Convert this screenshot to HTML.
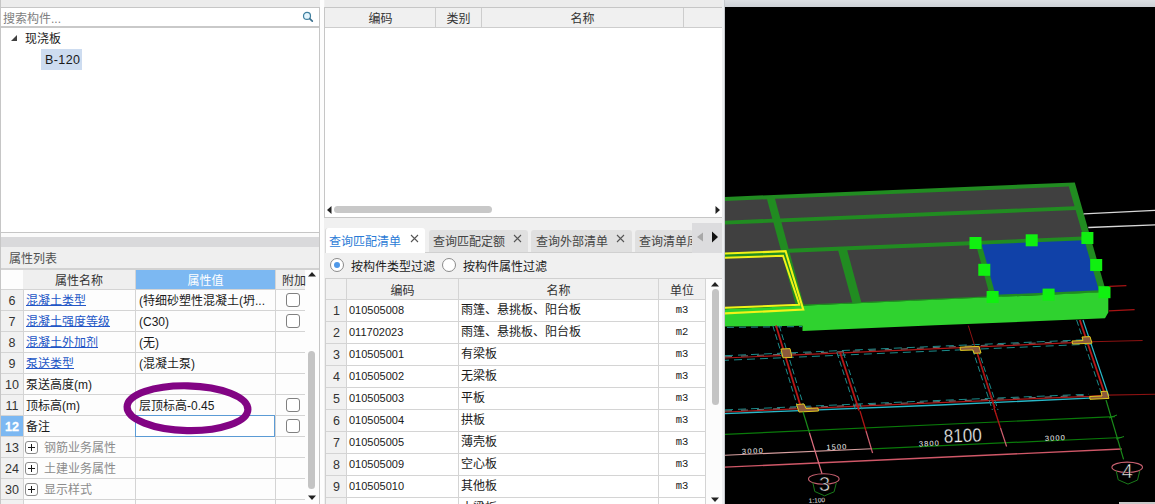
<!DOCTYPE html>
<html lang="zh-CN">
<head>
<meta charset="utf-8">
<title>属性列表</title>
<style>
*{box-sizing:border-box;margin:0;padding:0}
html,body{width:1155px;height:504px;overflow:hidden;background:#f0f0f0}
body{position:relative;font-family:"Liberation Sans","Noto Sans CJK SC",sans-serif;font-size:12px;color:#1a1a1a;line-height:1}
.a{position:absolute}
.t{position:absolute;white-space:nowrap;line-height:14px;height:14px}
.hl{position:absolute;height:1px;background:#d4d4d4}
.vl{position:absolute;width:1px;background:#d4d4d4}
.cb{position:absolute;width:14px;height:14px;border:1px solid #808080;border-radius:3px;background:#fff}
.pm{position:absolute;width:13px;height:13px;border:1px solid #8c8c8c;border-radius:3px;background:#fff}
.pm:before{content:"";position:absolute;left:2px;top:5px;width:7px;height:1px;background:#1a1a1a}
.pm:after{content:"";position:absolute;left:5px;top:2px;width:1px;height:7px;background:#1a1a1a}
.bl{color:#2356c6;text-decoration:underline;text-underline-offset:0px;text-decoration-thickness:1px}
.gy{color:#8c8c8c}
.c{text-align:center}
.tab{position:absolute;top:230px;height:22px;background:#e0e0e0;border-radius:3px 3px 0 0}
.x{position:absolute}
</style>
</head>
<body>

<!-- LEFT PANEL -->
<div class="a" style="left:0;top:0;width:325px;height:504px;background:#f0f0f0"></div>
<div class="a" style="left:0;top:0;width:320px;height:7px;background:#ececec"></div>
<div class="a" style="left:0;top:7px;width:320px;height:226px;background:#fff;border:1px solid #c6c6c6"></div>
<div class="t" style="left:3px;top:12px;color:#808080">搜索构件...</div>
<svg class="a" style="left:301px;top:10px" width="14" height="14" viewBox="0 0 14 14"><circle cx="6" cy="5.9" r="3.5" fill="#e4f5fd" stroke="#3f7f9f" stroke-width="1.2"/><path d="M8.7 8.6 L11.3 11.1" stroke="#3f7290" stroke-width="1.7" stroke-linecap="round"/></svg>
<div class="a" style="left:1px;top:26px;width:318px;height:2px;background:#c9c9c9"></div>
<svg class="a" style="left:10px;top:34px" width="8" height="8" viewBox="0 0 8 8"><path d="M7 1 L7 7 L1 7 Z" fill="#404040"/></svg>
<div class="t" style="left:25px;top:32px">现浇板</div>
<div class="a" style="left:41px;top:49px;width:41px;height:21px;background:#cddcf0"></div>
<div class="t" style="left:45px;top:53px;font-size:12.5px;letter-spacing:.4px">B-120</div>
<div class="a" style="left:0;top:233px;width:320px;height:4px;background:#fbfbfb"></div>
<div class="a" style="left:0;top:237px;width:320px;height:10px;background:#d9d9db"></div>
<div class="a" style="left:0;top:247px;width:320px;height:23px;background:#efefef"></div>
<div class="t" style="left:9px;top:252px;color:#505050;font-size:12px">属性列表</div>
<div class="a" style="left:0;top:268px;width:320px;height:2px;background:#d2d2d2"></div>
<div class="a" style="left:1px;top:270px;width:318px;height:234px;background:#fdfdfd"></div>
<div class="a" style="left:1px;top:290px;width:22px;height:214px;background:#f1f1f1"></div>
<div class="a" style="left:23px;top:270px;width:282px;height:19px;background:#efefef"></div>
<div class="a" style="left:136px;top:270px;width:139px;height:19px;background:#7cb8f2"></div>
<div class="t c" style="left:22px;top:274px;width:114px;color:#333">属性名称</div>
<div class="t c" style="left:136px;top:274px;width:139px;color:#fff">属性值</div>
<div class="t" style="left:282px;top:274px;color:#333">附加</div>

<div class="hl" style="left:1px;top:310px;width:304px"></div>
<div class="t c" style="left:1px;top:294px;width:22px;color:#333;font-size:12.5px">6</div>
<div class="t bl" style="left:26px;top:294px">混凝土类型</div>
<div class="t" style="left:139px;top:294px">(特细砂塑性混凝土(坍...</div>
<div class="cb" style="left:286px;top:293px"></div>
<div class="hl" style="left:1px;top:331px;width:304px"></div>
<div class="t c" style="left:1px;top:315px;width:22px;color:#333;font-size:12.5px">7</div>
<div class="t bl" style="left:26px;top:315px">混凝土强度等级</div>
<div class="t" style="left:139px;top:315px">(C30)</div>
<div class="cb" style="left:286px;top:314px"></div>
<div class="hl" style="left:1px;top:352px;width:304px"></div>
<div class="t c" style="left:1px;top:336px;width:22px;color:#333;font-size:12.5px">8</div>
<div class="t bl" style="left:26px;top:336px">混凝土外加剂</div>
<div class="t" style="left:139px;top:336px">(无)</div>
<div class="hl" style="left:1px;top:373px;width:304px"></div>
<div class="t c" style="left:1px;top:357px;width:22px;color:#333;font-size:12.5px">9</div>
<div class="t bl" style="left:26px;top:357px">泵送类型</div>
<div class="t" style="left:139px;top:357px">(混凝土泵)</div>
<div class="hl" style="left:1px;top:394px;width:304px"></div>
<div class="t c" style="left:1px;top:378px;width:22px;color:#333;font-size:12.5px">10</div>
<div class="t " style="left:26px;top:378px">泵送高度(m)</div>
<div class="hl" style="left:1px;top:415px;width:304px"></div>
<div class="t c" style="left:1px;top:399px;width:22px;color:#333;font-size:12.5px">11</div>
<div class="t " style="left:26px;top:399px">顶标高(m)</div>
<div class="t" style="left:139px;top:399px">层顶标高-0.45</div>
<div class="cb" style="left:286px;top:398px"></div>
<div class="hl" style="left:1px;top:436px;width:304px"></div>
<div class="a" style="left:1px;top:416px;width:22px;height:20px;background:#7cb8f2"></div>
<div class="t c" style="left:1px;top:420px;width:22px;color:#fff;font-weight:bold;font-size:12.5px;-webkit-text-stroke:.3px #fff">12</div>
<div class="t " style="left:26px;top:420px">备注</div>
<div class="cb" style="left:286px;top:419px"></div>
<div class="hl" style="left:1px;top:457px;width:304px"></div>
<div class="t c" style="left:1px;top:441px;width:22px;color:#333;font-size:12.5px">13</div>
<div class="pm" style="left:25px;top:441px"></div>
<div class="t gy" style="left:44px;top:441px">钢筋业务属性</div>
<div class="hl" style="left:1px;top:478px;width:304px"></div>
<div class="t c" style="left:1px;top:462px;width:22px;color:#333;font-size:12.5px">24</div>
<div class="pm" style="left:25px;top:462px"></div>
<div class="t gy" style="left:44px;top:462px">土建业务属性</div>
<div class="hl" style="left:1px;top:499px;width:304px"></div>
<div class="t c" style="left:1px;top:483px;width:22px;color:#333;font-size:12.5px">30</div>
<div class="pm" style="left:25px;top:483px"></div>
<div class="t gy" style="left:44px;top:483px">显示样式</div>
<div class="vl" style="left:23px;top:290px;height:214px"></div>
<div class="vl" style="left:135px;top:270px;height:234px"></div>
<div class="vl" style="left:275px;top:270px;height:234px"></div>
<div class="hl" style="left:1px;top:289px;width:304px"></div>
<div class="a" style="left:135px;top:415px;width:140px;height:22px;border:1px solid #5b9bd5;background:#fff"></div>
<svg class="a" style="left:115px;top:375px" width="150" height="70" viewBox="115 375 150 70"><ellipse cx="187.5" cy="408.2" rx="60.4" ry="22.4" fill="none" stroke="#820484" stroke-width="7.2" transform="rotate(1.2 187.5 408.2)"/></svg>
<svg class="a" style="left:307px;top:271px" width="10" height="6" viewBox="0 0 10 6"><path d="M1 5.5 L5 1 L9 5.5 Z" fill="#222"/></svg>
<svg class="a" style="left:307px;top:495px" width="10" height="6" viewBox="0 0 10 6"><path d="M1 .5 L5 5 L9 .5 Z" fill="#222"/></svg>
<div class="a" style="left:308px;top:351px;width:7px;height:138px;background:#c4c4c4;border-radius:3.5px"></div>
<div class="a" style="left:319px;top:7px;width:1px;height:497px;background:#c6c6c6"></div>
<div class="a" style="left:0;top:0;width:1px;height:504px;background:#c6c6c6"></div>
<div class="a" style="left:320px;top:0;width:4px;height:504px;background:#fdfdfd"></div>

<!-- MIDDLE PANEL -->
<div class="a" style="left:325px;top:0;width:398px;height:7px;background:#ececec"></div>
<div class="a" style="left:324px;top:7px;width:399px;height:211px;background:#fff;border:1px solid #c6c6c6"></div>
<div class="a" style="left:325px;top:8px;width:397px;height:19px;background:#f0f0f0"></div>
<div class="hl" style="left:325px;top:27px;width:397px;background:#cdcdcd"></div>
<div class="vl" style="left:435px;top:8px;height:19px;background:#cdcdcd"></div>
<div class="vl" style="left:481px;top:8px;height:19px;background:#cdcdcd"></div>
<div class="vl" style="left:683px;top:8px;height:19px;background:#cdcdcd"></div>
<div class="t c" style="left:326px;top:12px;width:109px;color:#333">编码</div>
<div class="t c" style="left:436px;top:12px;width:45px;color:#333">类别</div>
<div class="t c" style="left:482px;top:12px;width:201px;color:#333">名称</div>
<svg class="a" style="left:326px;top:205px" width="6" height="10" viewBox="0 0 6 10"><path d="M5.5 1 L1 5 L5.5 9 Z" fill="#222"/></svg>
<svg class="a" style="left:715px;top:205px" width="6" height="10" viewBox="0 0 6 10"><path d="M.5 1 L5 5 L.5 9 Z" fill="#222"/></svg>
<div class="a" style="left:334px;top:206px;width:158px;height:7px;background:#c8c8c8;border-radius:4px"></div>

<div class="a" style="left:325px;top:218px;width:398px;height:35px;background:#f0f0f0"></div>
<div class="a" style="left:325px;top:252px;width:398px;height:1px;background:#d0d0d0"></div>
<div class="tab" style="left:325px;width:100px;background:#fff;top:228px;height:25px;border-left:1px solid #d8d8d8"></div>
<div class="t" style="left:329px;top:235px;color:#2b7bd6">查询匹配清单</div>
<div class="tab" style="left:429px;width:99px"></div>
<div class="t" style="left:433px;top:235px;color:#444">查询匹配定额</div>
<div class="tab" style="left:531px;width:101px"></div>
<div class="t" style="left:536px;top:235px;color:#444">查询外部清单</div>
<div class="tab" style="left:635px;width:58px"></div>
<div class="a" style="left:639px;top:235px;width:53px;height:14px;overflow:hidden"><div class="t" style="left:0;top:0;color:#444">查询清单库</div></div>
<div class="a" style="left:692px;top:223px;width:31px;height:30px;background:#dcdcde"></div>
<svg class="a" style="left:696px;top:232px" width="8" height="10" viewBox="0 0 8 10"><path d="M7 .5 L1 5 L7 9.5 Z" fill="#a8a8a8"/></svg>
<svg class="a" style="left:711px;top:231px" width="8" height="12" viewBox="0 0 8 12"><path d="M1 .5 L7 6 L1 11.5 Z" fill="#111"/></svg>

<svg class="a" style="left:410px;top:234px" width="9" height="9" viewBox="0 0 9 9"><path d="M1 1 L8 8 M8 1 L1 8" stroke="#555" stroke-width="1.1" fill="none"/></svg>
<svg class="a" style="left:513px;top:234px" width="9" height="9" viewBox="0 0 9 9"><path d="M1 1 L8 8 M8 1 L1 8" stroke="#555" stroke-width="1.1" fill="none"/></svg>
<svg class="a" style="left:616px;top:234px" width="9" height="9" viewBox="0 0 9 9"><path d="M1 1 L8 8 M8 1 L1 8" stroke="#555" stroke-width="1.1" fill="none"/></svg>
<div class="a" style="left:325px;top:253px;width:398px;height:25px;background:#f0f0f0"></div>
<div class="a" style="left:330px;top:258px;width:14px;height:14px;border:1px solid #8a8a8a;border-radius:50%;background:#fff"></div>
<div class="a" style="left:334px;top:262px;width:6px;height:6px;border-radius:50%;background:#4f98e8"></div>
<div class="t" style="left:351px;top:260px">按构件类型过滤</div>
<div class="a" style="left:442px;top:258px;width:14px;height:14px;border:1px solid #8a8a8a;border-radius:50%;background:#fff"></div>
<div class="t" style="left:463px;top:260px">按构件属性过滤</div>

<div class="a" style="left:325px;top:278px;width:398px;height:226px;background:#fff;border-top:1px solid #d0d0d0;border-left:1px solid #d0d0d0"></div>
<div class="a" style="left:326px;top:279px;width:379px;height:20px;background:#f0f0f0"></div>
<div class="a" style="left:326px;top:279px;width:20px;height:225px;background:#f1f1f1"></div>
<div class="t c" style="left:347px;top:284px;width:111px;color:#333">编码</div>
<div class="t c" style="left:459px;top:284px;width:199px;color:#333">名称</div>
<div class="t c" style="left:659px;top:284px;width:46px;color:#333">单位</div>

<div class="hl" style="left:326px;top:321px;width:379px"></div>
<div class="t c" style="left:326px;top:304px;width:21px;color:#333;font-size:12.5px">1</div>
<div class="t" style="left:349px;top:303px;font-size:11px">010505008</div>
<div class="t" style="left:461px;top:303px">雨篷、悬挑板、阳台板</div>
<div class="t c" style="left:659px;top:303px;width:46px;font-family:'Liberation Mono',monospace;font-size:10.5px">m3</div>
<div class="hl" style="left:326px;top:343px;width:379px"></div>
<div class="t c" style="left:326px;top:326px;width:21px;color:#333;font-size:12.5px">2</div>
<div class="t" style="left:349px;top:325px;font-size:11px">011702023</div>
<div class="t" style="left:461px;top:325px">雨篷、悬挑板、阳台板</div>
<div class="t c" style="left:659px;top:325px;width:46px;font-family:'Liberation Mono',monospace;font-size:10.5px">m2</div>
<div class="hl" style="left:326px;top:365px;width:379px"></div>
<div class="t c" style="left:326px;top:348px;width:21px;color:#333;font-size:12.5px">3</div>
<div class="t" style="left:349px;top:347px;font-size:11px">010505001</div>
<div class="t" style="left:461px;top:347px">有梁板</div>
<div class="t c" style="left:659px;top:347px;width:46px;font-family:'Liberation Mono',monospace;font-size:10.5px">m3</div>
<div class="hl" style="left:326px;top:387px;width:379px"></div>
<div class="t c" style="left:326px;top:370px;width:21px;color:#333;font-size:12.5px">4</div>
<div class="t" style="left:349px;top:369px;font-size:11px">010505002</div>
<div class="t" style="left:461px;top:369px">无梁板</div>
<div class="t c" style="left:659px;top:369px;width:46px;font-family:'Liberation Mono',monospace;font-size:10.5px">m3</div>
<div class="hl" style="left:326px;top:409px;width:379px"></div>
<div class="t c" style="left:326px;top:392px;width:21px;color:#333;font-size:12.5px">5</div>
<div class="t" style="left:349px;top:391px;font-size:11px">010505003</div>
<div class="t" style="left:461px;top:391px">平板</div>
<div class="t c" style="left:659px;top:391px;width:46px;font-family:'Liberation Mono',monospace;font-size:10.5px">m3</div>
<div class="hl" style="left:326px;top:431px;width:379px"></div>
<div class="t c" style="left:326px;top:414px;width:21px;color:#333;font-size:12.5px">6</div>
<div class="t" style="left:349px;top:413px;font-size:11px">010505004</div>
<div class="t" style="left:461px;top:413px">拱板</div>
<div class="t c" style="left:659px;top:413px;width:46px;font-family:'Liberation Mono',monospace;font-size:10.5px">m3</div>
<div class="hl" style="left:326px;top:453px;width:379px"></div>
<div class="t c" style="left:326px;top:436px;width:21px;color:#333;font-size:12.5px">7</div>
<div class="t" style="left:349px;top:435px;font-size:11px">010505005</div>
<div class="t" style="left:461px;top:435px">薄壳板</div>
<div class="t c" style="left:659px;top:435px;width:46px;font-family:'Liberation Mono',monospace;font-size:10.5px">m3</div>
<div class="hl" style="left:326px;top:475px;width:379px"></div>
<div class="t c" style="left:326px;top:458px;width:21px;color:#333;font-size:12.5px">8</div>
<div class="t" style="left:349px;top:457px;font-size:11px">010505009</div>
<div class="t" style="left:461px;top:457px">空心板</div>
<div class="t c" style="left:659px;top:457px;width:46px;font-family:'Liberation Mono',monospace;font-size:10.5px">m3</div>
<div class="hl" style="left:326px;top:497px;width:379px"></div>
<div class="t c" style="left:326px;top:480px;width:21px;color:#333;font-size:12.5px">9</div>
<div class="t" style="left:349px;top:479px;font-size:11px">010505010</div>
<div class="t" style="left:461px;top:479px">其他板</div>
<div class="t c" style="left:659px;top:479px;width:46px;font-family:'Liberation Mono',monospace;font-size:10.5px">m3</div>
<div class="hl" style="left:326px;top:519px;width:379px"></div>
<div class="t c" style="left:326px;top:502px;width:21px;color:#333;font-size:12.5px"></div>
<div class="t" style="left:349px;top:501px;font-size:11px"></div>
<div class="t" style="left:461px;top:501px">十梁板</div>
<div class="t c" style="left:659px;top:501px;width:46px;font-family:'Liberation Mono',monospace;font-size:10.5px"></div>
<div class="hl" style="left:326px;top:299px;width:379px"></div>
<div class="vl" style="left:346px;top:279px;height:225px"></div>
<div class="vl" style="left:458px;top:279px;height:225px"></div>
<div class="vl" style="left:658px;top:279px;height:225px"></div>
<div class="vl" style="left:705px;top:279px;height:225px"></div>
<div class="a" style="left:706px;top:279px;width:17px;height:225px;background:#fcfcfc"></div>
<svg class="a" style="left:710px;top:281px" width="10" height="6" viewBox="0 0 10 6"><path d="M1 5.5 L5 1 L9 5.5 Z" fill="#222"/></svg>
<svg class="a" style="left:710px;top:497px" width="10" height="6" viewBox="0 0 10 6"><path d="M1 .5 L5 5 L9 .5 Z" fill="#222"/></svg>
<div class="a" style="left:711.5px;top:289px;width:7px;height:116px;background:#c4c4c4;border-radius:3.5px"></div>
<div class="a" style="left:722px;top:0;width:3px;height:504px;background:#eceef0"></div><div class="a" style="left:723.5px;top:0;width:1.5px;height:504px;background:#c6c9cd"></div>

<!-- 3D VIEW -->
<div class="a" style="left:725px;top:0;width:430px;height:7px;background:linear-gradient(#dcdfe3,#cdd1d6)"></div>
<svg class="a" style="left:725px;top:7px" width="430" height="497" viewBox="725 7 430 497">
<rect x="725" y="7" width="430" height="497" fill="#000"/>
<polygon points="725.0,197.0 1074.8,182.4 1106.2,292.3 725.0,309.2" fill="#218c21" />
<polygon points="725.0,200.9 767.0,199.2 772.3,218.7 725.0,220.7" fill="#404040" />
<polygon points="775.0,198.8 1068.8,186.6 1074.5,206.2 780.3,218.4" fill="#404040" />
<polygon points="725.0,224.6 773.4,222.6 781.0,250.6 725.0,252.8" fill="#404040" />
<polygon points="781.4,222.3 1075.6,210.1 1083.3,236.5 788.6,248.8" fill="#404040" />
<polygon points="725.0,257.2 782.2,255.2 795.7,304.8 725.0,307.9" fill="#404040" />
<polygon points="789.7,252.7 838.2,250.7 852.3,302.4 803.7,304.5" fill="#404040" />
<polygon points="847.2,250.3 976.1,245.0 990.0,296.3 861.2,302.0" fill="#404040" />
<polygon points="981.7,244.5 1084.4,240.3 1098.9,290.3 995.4,294.8" fill="#1041a8" />
<polygon points="725.0,309.2 1106.2,292.1 1108.3,292.6 1108.3,312.5 1105.0,318.3 935.0,325.3 802.5,331.0 802.5,325.8 725.0,326.6" fill="#2fd22f" />
<polyline points="724,253.6 785.6,251.2 803.3,309.6 724,313.4" fill="none" stroke="#f2f218" stroke-width="2.1"/>
<polyline points="724,257.9 783,255.8 799.4,304.8 724,307.8" fill="none" stroke="#f2f218" stroke-width="2"/>
<rect x="969.5" y="237.0" width="12" height="12" fill="#10f010"/>
<rect x="1025.7" y="234.3" width="12" height="12" fill="#10f010"/>
<rect x="1081.4" y="232.0" width="12" height="12" fill="#10f010"/>
<rect x="978.3" y="263.8" width="12" height="12" fill="#10f010"/>
<rect x="1090.2" y="259.0" width="12" height="12" fill="#10f010"/>
<rect x="986.6" y="291.0" width="12" height="12" fill="#10f010"/>
<rect x="1042.6" y="288.6" width="12" height="12" fill="#10f010"/>
<rect x="1098.5" y="286.2" width="12" height="12" fill="#10f010"/>
<line x1="1083.6" y1="213.8" x2="1155.0" y2="210.4" stroke="#d8d8d8" stroke-width="1.3" />
<line x1="1088.3" y1="227.5" x2="1155.0" y2="224.9" stroke="#d8d8d8" stroke-width="1.3" />
<line x1="1109.3" y1="286.3" x2="1126.4" y2="285.7" stroke="#a81414" stroke-width="1.2" />
<line x1="1108.8" y1="310.9" x2="1134.6" y2="309.7" stroke="#a81414" stroke-width="1.2" />
<line x1="725.0" y1="358.0" x2="1091.0" y2="341.8" stroke="#b01616" stroke-width="1.2" />
<line x1="1091.0" y1="341.8" x2="1142.6" y2="340.5" stroke="#8c1212" stroke-width="1.1" />
<line x1="725.0" y1="355.7" x2="1091.0" y2="339.5" stroke="#1c8c8c" stroke-width="1" stroke-dasharray="8 5"/>
<line x1="725.0" y1="360.3" x2="1091.0" y2="344.1" stroke="#1c8c8c" stroke-width="1" stroke-dasharray="8 5" stroke-dashoffset="4"/>
<line x1="725.0" y1="356.8" x2="1091.0" y2="340.6" stroke="#8a8a8a" stroke-width="0.8" stroke-dasharray="7 9"/>
<polyline points="725,412 940,402.6 1089,396.3 1106.4,395.1" fill="none" stroke="#b01616" stroke-width="1.2"/>
<line x1="1106.4" y1="395.1" x2="1155.0" y2="394.2" stroke="#8c1212" stroke-width="1.1" />
<polyline points="725,409.9 940,400.4 1089,394.2" fill="none" stroke="#1c8c8c" stroke-width="1" stroke-dasharray="8 5"/>
<polyline points="725,413.6 940,405 1089,398.1 1100,397.5" fill="none" stroke="#28b8c8" stroke-width="1.4"/>
<polyline points="725,411 940,401.5 1089,395.2" fill="none" stroke="#8a8a8a" stroke-width=".8" stroke-dasharray="7 9"/>
<line x1="727.0" y1="327.4" x2="802.0" y2="326.6" stroke="#1c8c8c" stroke-width="1" stroke-dasharray="7 5"/>
<line x1="776.0" y1="325.6" x2="801.0" y2="407.5" stroke="#b81818" stroke-width="1.8" />
<line x1="772.8" y1="325.6" x2="797.8" y2="407.5" stroke="#1c8c8c" stroke-width="1" stroke-dasharray="6 3"/>
<line x1="779.2" y1="325.6" x2="804.2" y2="407.5" stroke="#1c8c8c" stroke-width="1" stroke-dasharray="6 3"/>
<line x1="840.0" y1="352.3" x2="859.0" y2="410.5" stroke="#b81818" stroke-width="1.8" />
<line x1="836.8" y1="352.3" x2="855.8" y2="410.5" stroke="#1c8c8c" stroke-width="1" stroke-dasharray="6 3"/>
<line x1="843.2" y1="352.3" x2="862.2" y2="410.5" stroke="#1c8c8c" stroke-width="1" stroke-dasharray="6 3"/>
<line x1="1079.8" y1="320.0" x2="1105.5" y2="396.0" stroke="#b81818" stroke-width="1.8" />
<line x1="1076.6" y1="320.0" x2="1102.3" y2="396.0" stroke="#1c8c8c" stroke-width="1" stroke-dasharray="6 3"/>
<line x1="1083.0" y1="320.0" x2="1108.7" y2="396.0" stroke="#28b8c8" stroke-width="1.2" />
<line x1="968.3" y1="325.6" x2="996.0" y2="414.0" stroke="#8c1212" stroke-width="1" />
<line x1="972.4" y1="349.0" x2="992.4" y2="410.0" stroke="#1c8c8c" stroke-width="1" stroke-dasharray="6 3"/>
<line x1="978.0" y1="349.0" x2="998.0" y2="410.0" stroke="#1c8c8c" stroke-width="1" stroke-dasharray="6 3"/>
<line x1="977.0" y1="352.0" x2="995.0" y2="408.0" stroke="#b01616" stroke-width="1.3" />
<polygon points="781.0,349.0 790.0,348.6 792.0,357.4 783.0,357.8" fill="#8c5a3c" stroke="#e0c820" stroke-width="1"/>
<polygon points="796.5,404.5 804.0,404.0 806.0,408.5 818.0,408.0 818.5,411.0 799.0,412.0" fill="#8c5a3c" stroke="#e0c820" stroke-width="1"/>
<polygon points="960.0,347.2 979.0,346.4 981.0,353.0 974.0,353.3 973.0,350.0 960.5,350.4" fill="#8c5a3c" stroke="#e0c820" stroke-width="1"/>
<polygon points="1072.0,341.0 1083.0,340.5 1082.0,337.0 1090.0,336.6 1092.0,343.2 1072.5,344.0" fill="#8c5a3c" stroke="#e0c820" stroke-width="1"/>
<polygon points="1101.0,391.5 1107.0,391.2 1109.0,398.4 1090.0,399.3 1089.7,396.5 1102.0,396.0" fill="#8c5a3c" stroke="#e0c820" stroke-width="1"/>
<line x1="725.0" y1="434.3" x2="1115.0" y2="416.6" stroke="#0a7a0a" stroke-width="1.2" />
<line x1="725.0" y1="455.2" x2="872.0" y2="448.8" stroke="#d8a0a0" stroke-width="1.1" />
<line x1="872.0" y1="448.8" x2="1121.7" y2="437.5" stroke="#0a7a0a" stroke-width="1.2" />
<line x1="725.0" y1="467.2" x2="1121.7" y2="449.0" stroke="#d05868" stroke-width="1.3" />
<line x1="803.0" y1="411.8" x2="809.5" y2="433.0" stroke="#1a8a1a" stroke-width="1.2" />
<line x1="809.5" y1="433.0" x2="822.0" y2="473.7" stroke="#e07080" stroke-width="1.2" />
<line x1="860.0" y1="410.9" x2="866.0" y2="431.0" stroke="#b01616" stroke-width="1.3" />
<line x1="866.0" y1="431.0" x2="872.6" y2="453.0" stroke="#d06070" stroke-width="1.2" />
<line x1="994.0" y1="408.0" x2="1000.5" y2="428.0" stroke="#b01616" stroke-width="1.3" />
<line x1="1000.5" y1="428.0" x2="1006.6" y2="446.5" stroke="#d06070" stroke-width="1.2" />
<line x1="1106.0" y1="400.0" x2="1123.6" y2="459.4" stroke="#1a8a1a" stroke-width="1.2" />
<line x1="1109.0" y1="418.0" x2="1117.0" y2="415.0" stroke="#1a8a1a" stroke-width="1" />
<line x1="1116.0" y1="439.0" x2="1124.0" y2="436.5" stroke="#1a8a1a" stroke-width="1" />
<text x="752.5" y="453.5" font-family="Liberation Sans, sans-serif" font-size="7.5" fill="#f0f0f0" text-anchor="middle" transform="rotate(-2.5 752.5 453.5)" textLength="21">3000</text>
<text x="836.5" y="449.5" font-family="Liberation Sans, sans-serif" font-size="7.5" fill="#f0f0f0" text-anchor="middle" transform="rotate(-2.5 836.5 449.5)" textLength="20">1500</text>
<text x="929.0" y="446.0" font-family="Liberation Sans, sans-serif" font-size="7.5" fill="#f0f0f0" text-anchor="middle" transform="rotate(-2.5 929.0 446.0)" textLength="20">3800</text>
<text x="1055.0" y="440.5" font-family="Liberation Sans, sans-serif" font-size="7.5" fill="#f0f0f0" text-anchor="middle" transform="rotate(-2.5 1055.0 440.5)" textLength="20">3000</text>
<text x="963.0" y="442.0" font-family="Liberation Sans, sans-serif" font-size="19" fill="#f0f0f0" text-anchor="middle" transform="rotate(-2 963.0 442.0)" textLength="38" lengthAdjust="spacingAndGlyphs" stroke="#000" stroke-width=".3">8100</text>
<text x="817.0" y="502.5" font-family="Liberation Sans, sans-serif" font-size="6.5" fill="#f0f0f0" text-anchor="middle" transform="rotate(-3 817.0 502.5)" >1:100</text>
<ellipse cx="823.8" cy="479.0" rx="15.3" ry="5.2" fill="none" stroke="#c86070" stroke-width="1.1"/>
<polyline points="812.8,482.5 814.8,491.5 824.6,495.8 834.1,491.8 836.4,482.5" fill="none" stroke="#1a7a1a" stroke-width="1"/>
<text x="824.6" y="491.0" font-family="Liberation Sans, sans-serif" font-size="20" fill="#f0f0f0" stroke="#000" stroke-width=".55" text-anchor="middle">3</text>
<ellipse cx="1127.2" cy="467.3" rx="15.3" ry="5.2" fill="none" stroke="#c86070" stroke-width="1.1"/>
<polyline points="1116.2,470.8 1118.2,479.8 1128.0,484.1 1137.5,480.1 1139.8,470.8" fill="none" stroke="#1a7a1a" stroke-width="1"/>
<text x="1127.2" y="477.6" font-family="Liberation Sans, sans-serif" font-size="20" fill="#f0f0f0" stroke="#000" stroke-width=".55" text-anchor="middle">4</text>
<rect x="1119" y="502" width="36" height="2" fill="#c8c8c8"/>
</svg>
</body>
</html>
